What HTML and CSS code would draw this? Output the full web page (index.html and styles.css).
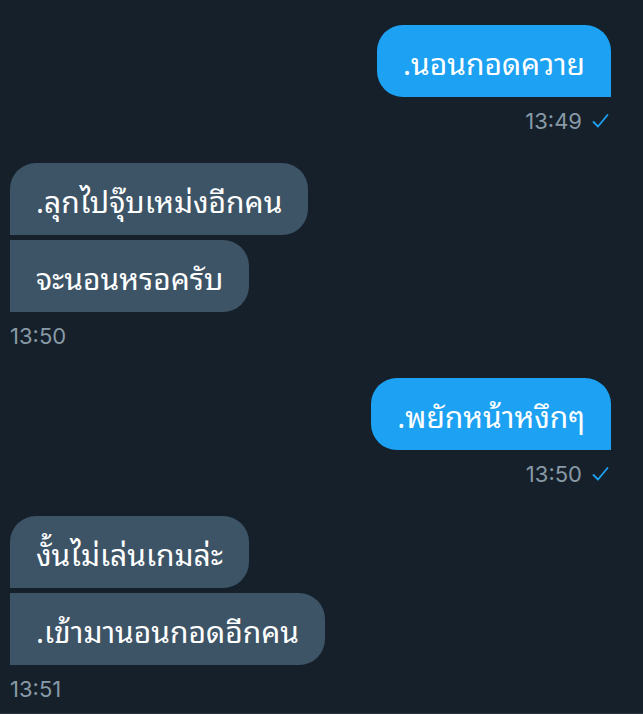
FILE: index.html
```html
<!DOCTYPE html>
<html lang="th">

<head>
    <meta charset="UTF-8">
    <meta name="viewport" content="width=device-width, initial-scale=1.0">
    <title>Messages</title>
    <link rel="stylesheet" href="styles.css">
</head>

<body>
    <div class="thread">
        <div class="group out">
            <div class="bubble single">.นอนกอดควาย</div>
            <div class="meta">13:49
                <svg class="check" width="17" height="16" viewBox="0 0 17 16"><path d="M1.5 9 L6 13.5 L15.5 2" fill="none" stroke="#1da1f2" stroke-width="1.8" stroke-linecap="round" stroke-linejoin="round"/></svg>
            </div>
        </div>
        <div class="group in">
            <div class="bubble first">.ลุกไปจุ๊บเหม่งอีกคน</div>
            <div class="bubble last">จะนอนหรอครับ</div>
            <div class="meta">13:50</div>
        </div>
        <div class="group out">
            <div class="bubble single">.พยักหน้าหงึกๆ</div>
            <div class="meta">13:50
                <svg class="check" width="17" height="16" viewBox="0 0 17 16"><path d="M1.5 9 L6 13.5 L15.5 2" fill="none" stroke="#1da1f2" stroke-width="1.8" stroke-linecap="round" stroke-linejoin="round"/></svg>
            </div>
        </div>
        <div class="group in">
            <div class="bubble first">งั้นไม่เล่นเกมล่ะ</div>
            <div class="bubble last">.เข้ามานอนกอดอีกคน</div>
            <div class="meta">13:51</div>
        </div>
    </div>
</body>

</html>
```

FILE: styles.css
```css
body {
    margin: 0;
    padding: 0;
    background-color: #15202b;
    font-family: 'Noto Sans Thai Looped', 'Noto Serif Thai', 'Noto Sans Thai', 'Noto Sans', sans-serif;
}

.thread {
    padding-top: 25px;
    min-height: 687px;
    border-bottom: 2px solid #2c3640;
}

.group {
    display: flex;
    flex-direction: column;
    gap: 5px;
    margin-bottom: 18px;
}

.group:last-child {
    margin-bottom: 0;
}

.group.out {
    align-items: flex-end;
    padding-right: 32px;
}

.group.in {
    align-items: flex-start;
    padding-left: 10px;
}

.bubble {
    box-sizing: border-box;
    height: 72px;
    padding: 0 26px;
    display: flex;
    align-items: center;
    color: #fff;
    font-size: 30px;
    white-space: nowrap;
}

.out .bubble {
    background-color: #1da1f2;
}

.in .bubble {
    background-color: #3d5466;
}

.bubble.single {
    border-radius: 26px 26px 0 26px;
}

.bubble.first {
    border-radius: 26px 26px 26px 0;
}

.bubble.last {
    border-radius: 0 26px 26px 0;
}

.meta {
    display: flex;
    align-items: center;
    gap: 10px;
    height: 48px;
    margin-top: -5px;
    color: #8899a6;
    font-family: Inter, 'Liberation Sans', sans-serif;
    font-size: 22px;
}

.out .meta {
    padding-right: 2px;
}
```
